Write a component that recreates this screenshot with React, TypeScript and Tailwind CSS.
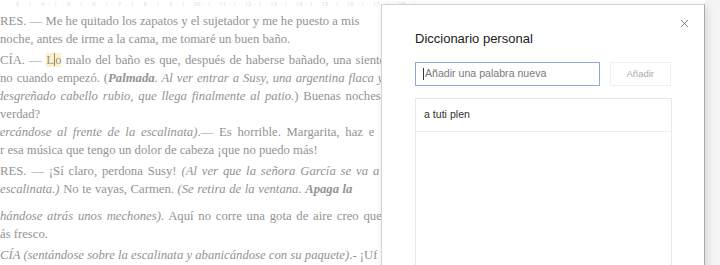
import React from "react";
import { X } from "lucide-react";

const serif = "font-['Liberation_Serif','Times_New_Roman',serif]";
const sans = "font-['Liberation_Sans',Arial,sans-serif]";

// Ruler numbers along the top edge of the document page
const rulerNums = [3, 4, 5, 6, 7, 8, 9, 10, 11, 12, 13, 14, 15, 16, 17, 18];

function Ruler() {
  return (
    <div className="flex h-[7px] items-end overflow-hidden pl-[10px] text-[6px] leading-[6px] text-[#e0e0e0]">
      {rulerNums.map((n) => (
        <div key={n} className="flex w-[25.6px] shrink-0 justify-between pr-[4px]">
          <span>·</span>
          <span>{n}</span>
          <span>·</span>
          <span>|</span>
        </div>
      ))}
    </div>
  );
}

function Document() {
  return (
    <div className={`${serif} text-[12.7px] leading-[18px] text-[#939393] whitespace-nowrap`}>
      <div className="mt-[5px]">
        <div>RES. — Me he quitado los zapatos y el sujetador y me he puesto a mis</div>
        <div>noche, antes de irme a la cama, me tomaré un buen baño.</div>
      </div>
      <div className="mt-[3px]">
        <div className="[word-spacing:1.15px]">
          CÍA. —{" "}
          <span className="bg-[#fdf0c8]">
            L<span className="inline-block h-[13px] w-px translate-y-[2px] bg-[#a48a5c] align-baseline" />o
          </span>{" "}
          malo del baño es que, después de haberse bañado, una siente
        </div>
        <div className="[word-spacing:0.8px]">
          no cuando empezó. (<span className="font-bold italic">Palmada</span>
          <span className="italic">. Al ver entrar a Susy, una argentina flaca y</span>
        </div>
        <div className="-ml-[3px] [word-spacing:1.7px]">
          <span className="italic">desgreñado cabello rubio, que llega finalmente al patio.</span>) Buenas noches
        </div>
        <div>verdad?</div>
      </div>
      <div>
        <div className="-ml-[6px] [word-spacing:2.6px]">
          <span className="italic">cercándose al frente de la escalinata)</span>.— Es horrible. Margarita, haz e
        </div>
        <div>r esa música que tengo un dolor de cabeza ¡que no puedo más!</div>
      </div>
      <div className="mt-[3px]">
        <div className="[word-spacing:1.7px]">
          RES. — ¡Sí claro, perdona Susy! <span className="italic">(Al ver que la señora García se va a</span>
        </div>
        <div className="[word-spacing:0.4px]">
          <span className="italic">escalinata.)</span> No te vayas, Carmen.{" "}
          <span className="italic">(Se retira de la ventana. </span>
          <span className="font-bold italic">Apaga la</span>
        </div>
      </div>
      <div className="mt-[9px]">
        <div className="[word-spacing:1.6px]">
          <span className="italic">hándose atrás unos mechones).</span> Aquí no corre una gota de aire creo que
        </div>
        <div>ás fresco.</div>
      </div>
      <div className="mt-[3px]">
        <div>
          <span className="italic">CÍA (sentándose sobre la escalinata y abanicándose con su paquete)</span>.- ¡Uf
        </div>
      </div>
    </div>
  );
}

function PersonalDictionary() {
  return (
    <div
      className={`${sans} absolute left-[381px] top-[4px] h-[290px] w-[324px] border border-[#d4d4d4] border-r-[#a9a9a9] bg-white px-[33px] pt-[26px] shadow-[2px_2px_8px_rgba(0,0,0,0.12)]`}
    >
      <button className="absolute right-[13px] top-[12px] text-[#5f5f5f]">
        <X className="h-[13px] w-[13px]" strokeWidth={1.4} />
      </button>
      <h2 className="text-[13px] leading-[16px] text-[#222]">Diccionario personal</h2>
      <div className="mt-[15px] flex gap-[10px]">
        <div className="flex h-[24px] w-[186px] items-center border border-[#8ea8dc] pl-[7px] text-[10.6px] text-[#7a7a7a]">
          <span className="mr-[1px] h-[12px] w-px bg-[#333]" />
          Añadir una palabra nueva
        </div>
        <div className="flex h-[24px] w-[62px] items-center justify-center border border-[#efefef] text-[9.5px] text-[#ababab]">
          Añadir
        </div>
      </div>
      <div className="mt-[12px] h-[200px] w-[257px] border border-[#e8e8e8]">
        <div className="flex h-[33px] items-center border-b border-[#ececec] pl-[8px] text-[10.6px] text-[#333]">
          a tuti plen
        </div>
      </div>
    </div>
  );
}

export default function App() {
  return (
    <div className="relative h-[265px] w-[720px] overflow-hidden bg-[#f4f4f4]">
      <div className="h-full w-[705px] overflow-hidden bg-white">
        <Ruler />
        <Document />
      </div>
      <PersonalDictionary />
    </div>
  );
}
